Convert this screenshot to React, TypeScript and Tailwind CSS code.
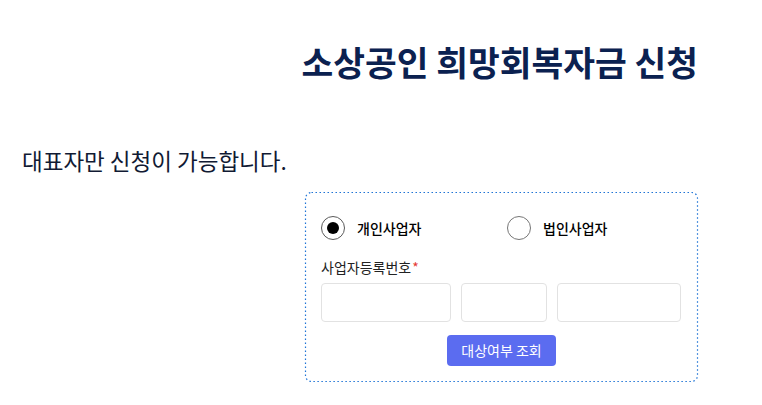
const font = { fontFamily: '"Noto Sans CJK KR", "Noto Sans", sans-serif' };

const Radio = ({ checked, label }: { checked?: boolean; label: string }) => (
  <label className="flex items-center gap-3 cursor-pointer">
    <span
      className={`w-6 h-6 rounded-full border flex items-center justify-center bg-white ${
        checked ? "border-[#5a5a5a] border-[1.5px]" : "border-[#767676]"
      }`}
    >
      {checked && <span className="w-3 h-3 rounded-full bg-black" />}
    </span>
    <span className="text-[14px] font-medium text-black leading-5">{label}</span>
  </label>
);

const App = () => {
  return (
    <div className="min-h-screen bg-white" style={font}>
      <div className="w-[676px] ml-[22px] pt-[36px]">
        <h1 className="text-[34.5px] leading-[50px] font-bold text-[#0b2150] text-right">
          소상공인 희망회복자금 신청
        </h1>
        <p className="mt-[58px] text-[22.5px] leading-8 text-[#111a33]">
          대표자만 신청이 가능합니다.
        </p>
        <div className="relative mt-4 ml-auto w-[393px] border border-transparent rounded-md px-[15px] pt-[23px] pb-[15px]">
          {/* dotted frame, sparser than a css dotted border */}
          <svg className="absolute inset-[-1px] w-[calc(100%+2px)] h-[calc(100%+2px)] pointer-events-none overflow-visible">
            <rect
              x="0.5"
              y="0.5"
              rx="6"
              className="[width:calc(100%-1px)] [height:calc(100%-1px)]"
              fill="none"
              stroke="#1f74d6"
              strokeWidth="1.2"
              strokeDasharray="1.5 2.5"
            />
          </svg>
          <div className="flex">
            <div className="w-[186px]">
              <Radio checked label="개인사업자" />
            </div>
            <Radio label="법인사업자" />
          </div>
          <div className="mt-[17px] text-[14px] leading-5 text-[#222]">
            사업자등록번호<span className="text-[#e53935] ml-[1px]">*</span>
          </div>
          <div className="mt-[6px] flex gap-[10px]">
            <input className="w-[130px] h-[39px] rounded border border-[#e2e2e2] outline-none px-2" />
            <input className="w-[86px] h-[39px] rounded border border-[#e2e2e2] outline-none px-2" />
            <input className="w-[124px] h-[39px] rounded border border-[#e2e2e2] outline-none px-2" />
          </div>
          <div className="mt-[13px] flex justify-center">
            <button className="w-[109px] h-[31px] rounded-sm bg-[#5b6cf0] text-white text-[14px]">
              대상여부 조회
            </button>
          </div>
        </div>
      </div>
    </div>
  );
};

export default App;
